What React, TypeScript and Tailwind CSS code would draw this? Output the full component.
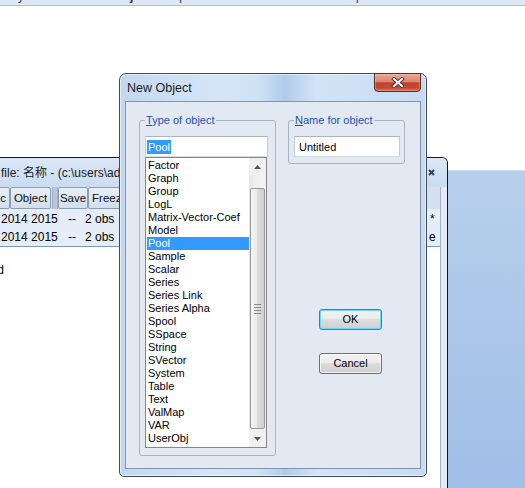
import React from "react";

const ITEMS = [
  "Factor",
  "Graph",
  "Group",
  "LogL",
  "Matrix-Vector-Coef",
  "Model",
  "Pool",
  "Sample",
  "Scalar",
  "Series",
  "Series Link",
  "Series Alpha",
  "Spool",
  "SSpace",
  "String",
  "SVector",
  "System",
  "Table",
  "Text",
  "ValMap",
  "VAR",
  "UserObj",
];

function ToolButton({ label, w, right }: { label: string; w: string; right?: boolean }) {
  return (
    <div
      className={`${w} h-[22px] shrink-0 rounded-[2px] border border-[#8b9db6] bg-linear-to-b from-[#e8eff8] to-[#d2deec] text-[11.5px] leading-[20px] text-[#111] ${
        right ? "pr-[3px] text-right" : "text-center"
      }`}
    >
      {label}
    </div>
  );
}

export default function App() {
  return (
    <div className="relative h-[488px] w-[525px] overflow-hidden bg-white font-['Liberation_Sans','Noto_Sans_CJK_SC',sans-serif] text-black">
      {/* top strip of a window above, mostly cut off */}
      <div className="h-[6px] overflow-hidden border-b border-[#a9bfdc] bg-[#dce8f6]">
        <div className="-mt-[11px] flex whitespace-pre text-[12px] leading-[14px] text-[#333]">
          <span className="ml-[18px]">y</span>
          <span className="ml-[106px] font-bold">j</span>
          <span className="ml-[46px]">p</span>
          <span className="ml-[170px]">p</span>
        </div>
      </div>

      {/* blue desktop area on the right */}
      <div className="absolute bottom-0 left-[448px] right-0 top-[170px] border-t border-[#cddcf0] bg-linear-to-b from-[#b7cfec] to-[#a0bee7]" />

      {/* background workfile window */}
      <div className="absolute left-[-200px] top-[157px] flex h-[340px] w-[648px] flex-col overflow-hidden rounded-tr-[6px] border-r border-t border-[#151515] bg-white">
        <div className="flex h-[29px] shrink-0 items-center justify-between bg-linear-to-b from-[#dae7f6] to-[#cadcf1] pl-[201px] pr-[12px] text-[12px] text-[#1a1a1a]">
          <span className="whitespace-pre">{"file: 名称 - (c:\\users\\administrator\\documents\\名称.wf1)"}</span>
          <svg width="7" height="7" viewBox="0 0 7 7">
            <path d="M1 1L6 6M6 1L1 6" stroke="#33445c" strokeWidth="2" />
          </svg>
        </div>
        <div className="flex flex-1">
          <div className="flex flex-1 flex-col">
            <div className="flex h-[22px] shrink-0 bg-[#d4e0ee] pl-[160px]">
              <ToolButton label="Proc" w="w-[50px]" right />
              <ToolButton label="Object" w="w-[41px]" />
              <div className="ml-[1px] h-[22px] w-[6px] shrink-0 border-x border-[#9fb0c5] bg-[#b9c6d7]" />
              <ToolButton label="Save" w="w-[30px]" />
              <ToolButton label="Freeze" w="w-[44px]" />
              <ToolButton label="Details+/-" w="w-[62px]" />
              <ToolButton label="Show" w="w-[34px]" />
              <ToolButton label="Fetch" w="w-[36px]" />
              <ToolButton label="Store" w="w-[36px]" />
              <ToolButton label="Delete" w="w-[40px]" />
              <ToolButton label="Genr" w="w-[34px]" />
              <ToolButton label="Sample" w="w-[44px]" />
            </div>
            <div className="h-[38px] shrink-0 border-b border-[#7e96bb] bg-[#e5edf8] pt-[1px] text-[12px]">
              <div className="flex h-[18px] items-center pl-[201px]">
                <span className="w-[67px] whitespace-pre">2014 2015</span>
                <span className="w-[17px]">--</span>
                <span>2 obs</span>
                <span className="ml-auto w-[12px] pl-[2px]">*</span>
              </div>
              <div className="flex h-[18px] items-center pl-[201px]">
                <span className="w-[67px] whitespace-pre">2014 2015</span>
                <span className="w-[17px]">--</span>
                <span>2 obs</span>
                <span className="ml-auto w-[12px] pl-[1px]">e</span>
              </div>
            </div>
            <div className="mt-[16px] flex text-[12px] leading-[14px]">
              <span className="w-[204px] text-right">Modified</span>
            </div>
          </div>
          <div className="w-[7px] border-l border-[#a3b3c8] bg-[#e4ebf6]" />
        </div>
      </div>

      {/* New Object dialog */}
      <div className="absolute left-[119px] top-[73px] flex h-[404px] w-[308px] flex-col rounded-b-[5px] rounded-t-[7px] border border-[#414b57] bg-[linear-gradient(90deg,#c2d8f0_0%,#d4e5f7_30%,#d0e3f6_45%,#b0cbea_54%,#d2e4f7_64%,#c6dbf2_100%)] px-[5px] pb-[7px] shadow-[inset_0_0_0_1px_rgba(255,255,255,0.55)]">
        <div className="flex h-[27px] shrink-0 items-center pl-[2px] pt-[2px] text-[12.5px] text-[#1b1b1b]">
          New Object
        </div>

        {/* close button */}
        <div className="absolute left-[254px] top-[-1px] flex h-[19px] w-[47px] items-center justify-center rounded-b-[4px] border border-[#5b2822] bg-[linear-gradient(#eaa99a,#d98472_45%,#c4412a_52%,#c64a33_80%,#d2715c)] shadow-[inset_0_0_0_1px_rgba(255,200,190,0.35)]">
          <svg width="14" height="11" viewBox="0 0 14 11">
            <path d="M3 2L11 9M11 2L3 9" stroke="#4a3431" strokeWidth="3.8" strokeLinecap="square" />
            <path d="M3 2L11 9M11 2L3 9" stroke="#ffffff" strokeWidth="2" strokeLinecap="square" />
          </svg>
        </div>

        {/* client area */}
        <div className="flex flex-1 items-start border border-[#8593a6] bg-[#e3e9f2] pl-[13px] pt-[18px]">
          {/* Type of object group */}
          <div className="relative h-[336px] w-[137px] shrink-0 rounded-[3px] border border-[#a6b3c4] pl-[5px] pt-[15px]">
            <div className="absolute left-[5px] top-[-7px] bg-[#e3e9f2] px-[1px] text-[11px] leading-[13px] text-[#1c52b0]">
              <u>T</u>ype of object
            </div>
            <div className="flex h-[21px] w-[123px] items-center border border-[#a9b5c4] border-b-[#d5dbe3] border-x-[#c3cbd6] bg-white pl-[1px]">
              <span className="bg-[#3399ff] px-[1px] text-[11px] leading-[14px] text-white">Pool</span>
            </div>
            <div className="flex h-[291px] w-[122px] border border-[#828790] bg-white">
              <div className="w-[103px] pl-[1px] pt-[1px]">
                {ITEMS.map((it) => (
                  <div
                    key={it}
                    className={`h-[13px] whitespace-pre pl-[1px] text-[11px] leading-[13px] ${
                      it === "Pool" ? "bg-[#3399ff] text-white" : "text-black"
                    }`}
                  >
                    {it}
                  </div>
                ))}
              </div>
              {/* scrollbar */}
              <div className="flex w-[17px] flex-col bg-[#ececec]">
                <div className="flex h-[17px] shrink-0 items-center justify-center bg-[#f0f0f0]">
                  <svg width="7" height="4" viewBox="0 0 7 4">
                    <path d="M0 4L3.5 0L7 4Z" fill="#555" />
                  </svg>
                </div>
                <div className="flex-1 bg-[linear-gradient(90deg,#e3e3e3,#f0f0f0_40%,#f3f3f3)] pt-[13px]">
                  <div className="mx-[1px] flex h-[241px] flex-col items-center justify-center gap-[2px] rounded-[2px] border border-[#979797] bg-[linear-gradient(90deg,#f4f4f4,#e9e9e9_50%,#dcdcdc_50%,#d0d0d0)]">
                    <div className="h-[1px] w-[7px] bg-[#8a8a8a]" />
                    <div className="h-[1px] w-[7px] bg-[#8a8a8a]" />
                    <div className="h-[1px] w-[7px] bg-[#8a8a8a]" />
                    <div className="h-[1px] w-[7px] bg-[#8a8a8a]" />
                  </div>
                </div>
                <div className="flex h-[17px] shrink-0 items-center justify-center bg-[#f0f0f0]">
                  <svg width="7" height="4" viewBox="0 0 7 4">
                    <path d="M0 0L7 0L3.5 4Z" fill="#555" />
                  </svg>
                </div>
              </div>
            </div>
          </div>

          {/* right column */}
          <div className="ml-[12px] flex flex-col">
            <div className="relative h-[44px] w-[117px] rounded-[3px] border border-[#a6b3c4] pl-[5px] pt-[15px]">
              <div className="absolute left-[5px] top-[-7px] bg-[#e3e9f2] px-[1px] text-[11px] leading-[13px] text-[#1c52b0]">
                <u>N</u>ame for object
              </div>
              <div className="flex h-[21px] w-[106px] items-center border border-[#a9b5c4] border-b-[#d5dbe3] border-x-[#c3cbd6] bg-white pl-[4px] text-[11px] leading-[14px]">
                Untitled
              </div>
            </div>
            <div className="ml-[31px] mt-[145px] flex h-[21px] w-[63px] items-center justify-center rounded-[3px] border border-[#3c7fb1] bg-[linear-gradient(#f2f2f2,#ebebeb_50%,#dddddd_50%,#cfcfcf)] text-[11px] shadow-[inset_0_0_0_1px_#6fd6ff]">
              OK
            </div>
            <div className="ml-[31px] mt-[23px] flex h-[21px] w-[63px] items-center justify-center rounded-[3px] border border-[#707070] bg-[linear-gradient(#f2f2f2,#ebebeb_50%,#dddddd_50%,#cfcfcf)] text-[11px] shadow-[inset_0_0_0_1px_rgba(255,255,255,0.7)]">
              Cancel
            </div>
          </div>
        </div>
      </div>
    </div>
  );
}
